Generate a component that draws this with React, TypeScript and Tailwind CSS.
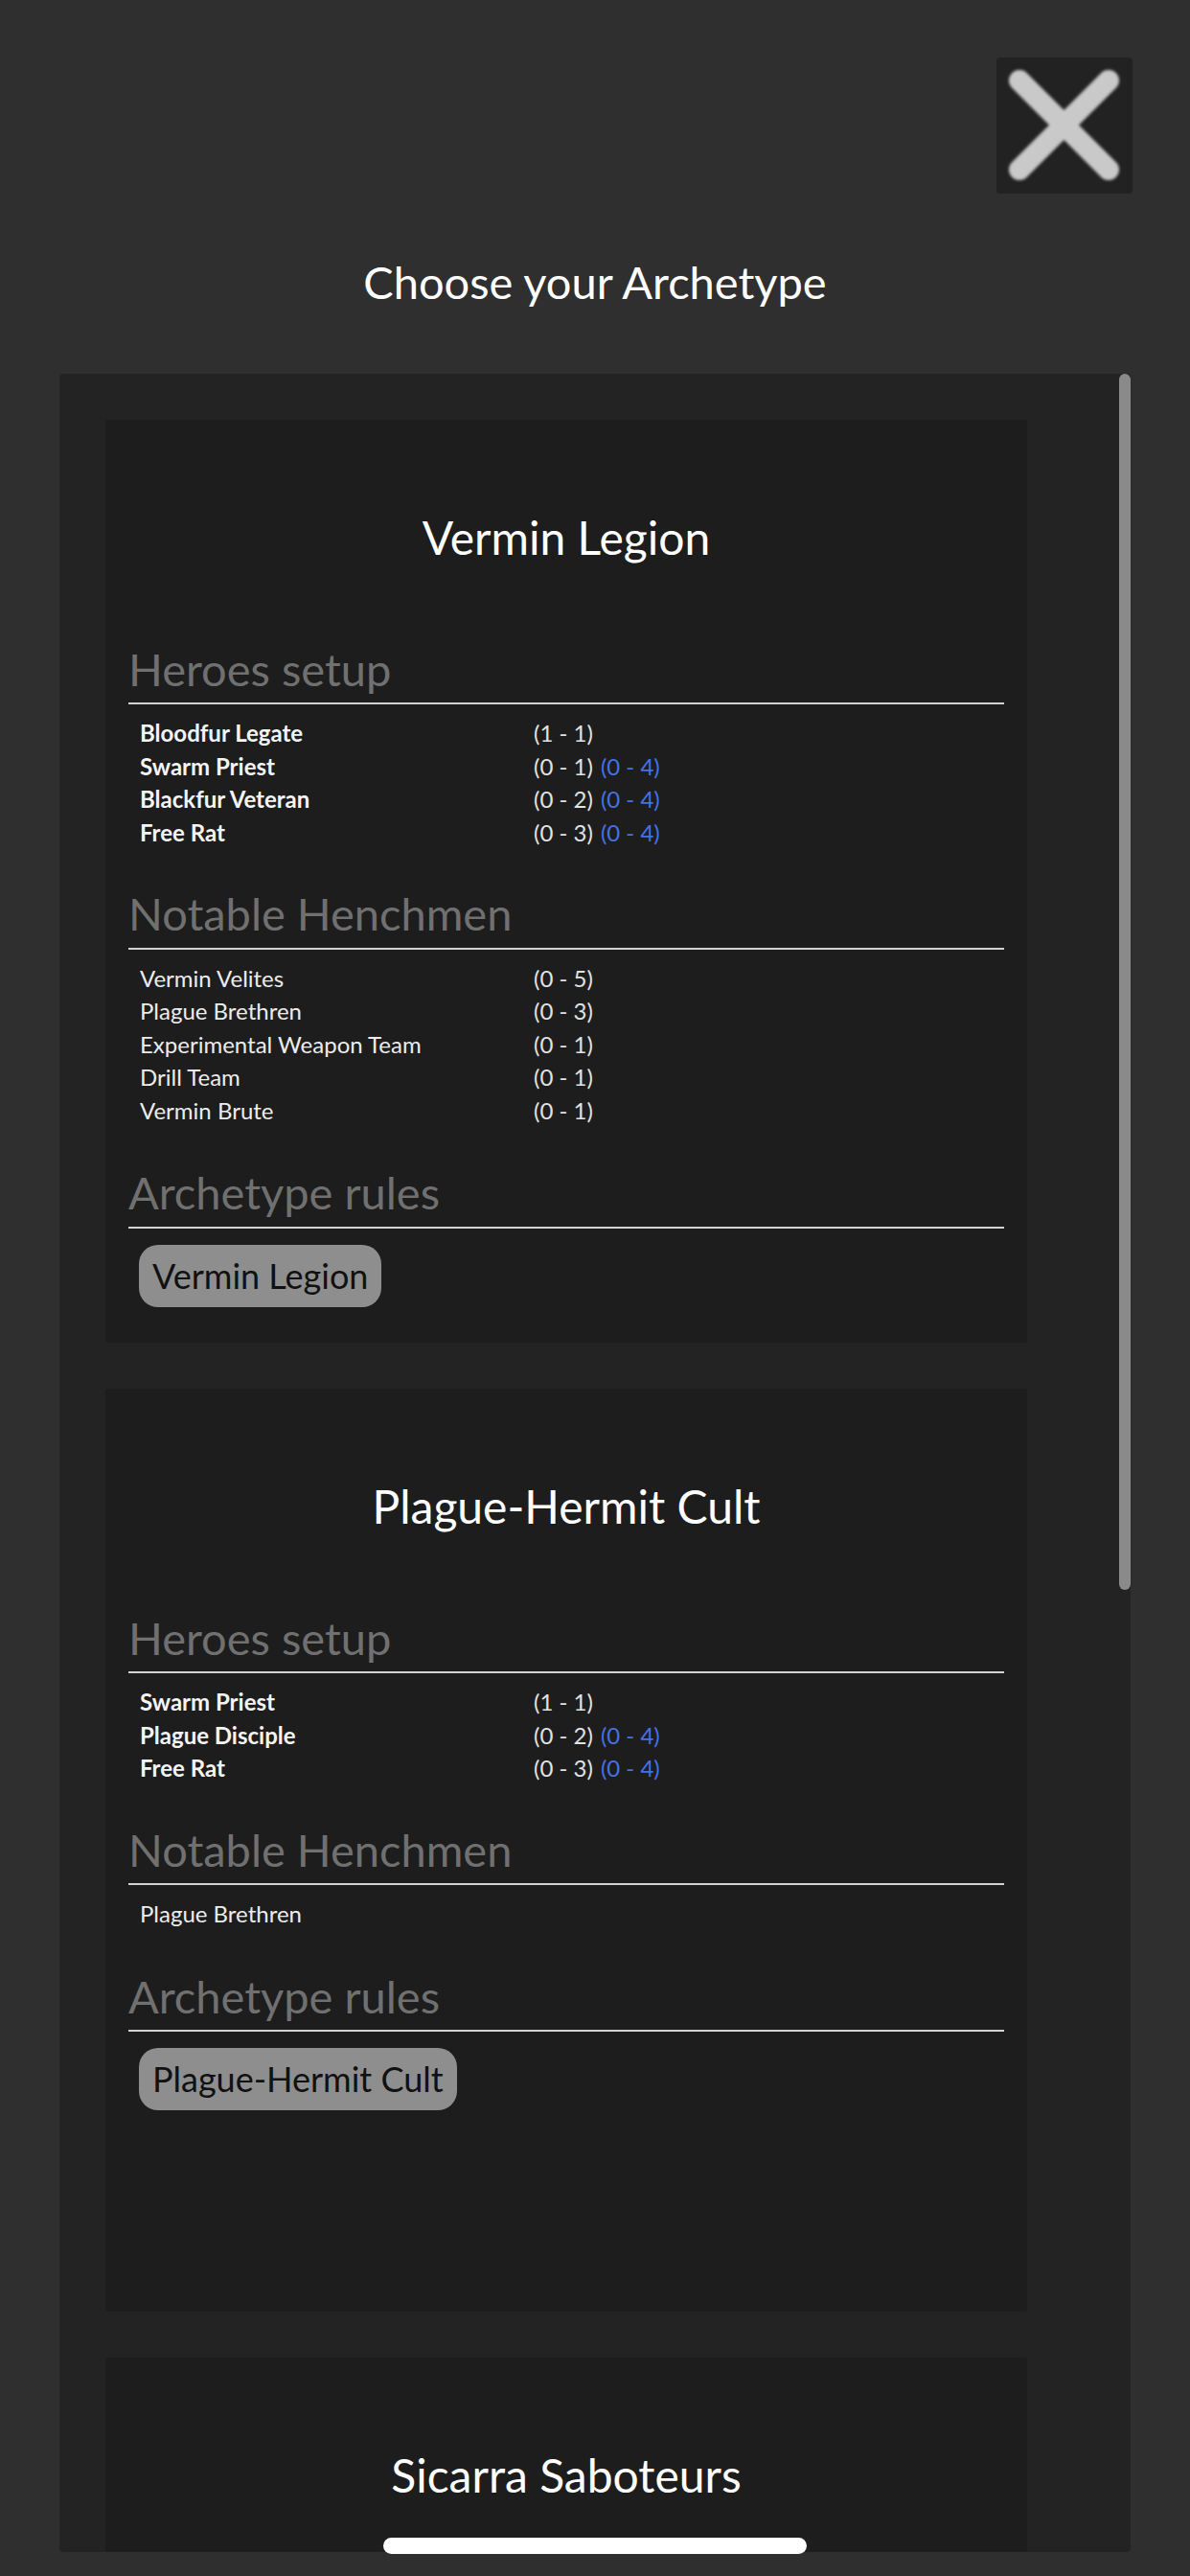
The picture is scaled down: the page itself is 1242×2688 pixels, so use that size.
import React from 'react';

interface Entry {
  name: string;
  range: string;
  extra?: string;
}

interface Archetype {
  id: string;
  title: string;
  heroes: Entry[];
  henchmen: Entry[];
  rules: string[];
}

const archetypes: Archetype[] = [
  {
    id: 'vermin-legion',
    title: 'Vermin Legion',
    heroes: [
      { name: 'Bloodfur Legate', range: '(1 - 1)' },
      { name: 'Swarm Priest', range: '(0 - 1)', extra: '(0 - 4)' },
      { name: 'Blackfur Veteran', range: '(0 - 2)', extra: '(0 - 4)' },
      { name: 'Free Rat', range: '(0 - 3)', extra: '(0 - 4)' }
    ],
    henchmen: [
      { name: 'Vermin Velites', range: '(0 - 5)' },
      { name: 'Plague Brethren', range: '(0 - 3)' },
      { name: 'Experimental Weapon Team', range: '(0 - 1)' },
      { name: 'Drill Team', range: '(0 - 1)' },
      { name: 'Vermin Brute', range: '(0 - 1)' }
    ],
    rules: ['Vermin Legion']
  },
  {
    id: 'plague-hermit',
    title: 'Plague-Hermit Cult',
    heroes: [
      { name: 'Swarm Priest', range: '(1 - 1)' },
      { name: 'Plague Disciple', range: '(0 - 2)', extra: '(0 - 4)' },
      { name: 'Free Rat', range: '(0 - 3)', extra: '(0 - 4)' }
    ],
    henchmen: [{ name: 'Plague Brethren', range: '' }],
    rules: ['Plague-Hermit Cult']
  },
  {
    id: 'sicarra',
    title: 'Sicarra Saboteurs',
    heroes: [],
    henchmen: [],
    rules: []
  }
];

const SectionTitle = ({ children }: { children: React.ReactNode }) => (
  <h3 className="pb-[7px] border-b-2 border-[#d2d2d2] text-[47px] leading-[1.2] text-[#707070]">
    {children}
  </h3>
);

const EntryTable = ({ rows, bold }: { rows: Entry[]; bold?: boolean }) => (
  <div className="mt-[13px] pl-[12px] grid grid-cols-[411px_1fr] text-[24px] leading-[34.5px]">
    {rows.map((row) => (
      <React.Fragment key={row.name}>
        <span className={bold ? 'font-bold text-[#f4f4f4]' : 'text-[#ececec]'}>{row.name}</span>
        <span className="text-[#e2e2e2]">
          {row.range}
          {row.extra && <span className="ml-[8px] text-[#4471e4]">{row.extra}</span>}
        </span>
      </React.Fragment>
    ))}
  </div>
);

const ArchetypeCard = ({ item }: { item: Archetype }) => (
  <div className="w-[962px] h-[963px] shrink-0 bg-[#1d1d1d] rounded-[3px] px-[24px] pt-[94px]">
    <h2 className="text-center text-[48px] leading-[1.2] text-white">{item.title}</h2>

    {item.heroes.length > 0 && (
      <div className="pt-[80px]">
        <SectionTitle>Heroes setup</SectionTitle>
        <EntryTable rows={item.heroes} bold />
      </div>
    )}

    {item.henchmen.length > 0 && (
      <div className="pt-[39px]">
        <SectionTitle>Notable Henchmen</SectionTitle>
        <EntryTable rows={item.henchmen} />
      </div>
    )}

    {item.rules.length > 0 && (
      <div className="pt-[40px]">
        <SectionTitle>Archetype rules</SectionTitle>
        <div className="mt-[17px] pl-[11px] flex flex-wrap gap-3">
          {item.rules.map((rule) => (
            <span
              key={rule}
              className="px-[14px] py-[11px] rounded-[20px] bg-[#8e8e8e] text-[36px] leading-[1.2] text-[#111111]"
            >
              {rule}
            </span>
          ))}
        </div>
      </div>
    )}
  </div>
);

const CloseIcon = () => (
  <svg width="142" height="142" viewBox="0 0 142 142" className="blur-[1.5px]">
    <path
      d="M24 24 L117 117 M117 24 L24 117"
      stroke="#c9c9c9"
      strokeWidth="22"
      strokeLinecap="round"
      fill="none"
    />
  </svg>
);

export default function App() {
  return (
    <div
      className="relative min-h-screen bg-[#2f2f2f] pt-[60px]"
      style={{ fontFamily: 'Lato, "Open Sans", sans-serif' }}
    >
      <div className="flex justify-end pr-[60px]">
        <button className="w-[142px] h-[142px] bg-[#222222] rounded-[4px] flex items-center justify-center">
          <CloseIcon />
        </button>
      </div>

      <h1 className="mt-[64px] text-center text-[47px] leading-[1.2] text-white">Choose your Archetype</h1>

      <div className="relative mx-[62px] mt-[68px] h-[2273px] bg-[#232323] rounded-[4px] overflow-hidden">
        <div className="flex flex-col gap-[48px] pl-[48px] pt-[48px]">
          {archetypes.map((item) => (
            <ArchetypeCard key={item.id} item={item} />
          ))}
        </div>
        {/* scroll thumb */}
        <div className="absolute top-0 right-0 w-[12px] h-[1269px] rounded-full bg-[#8a8a8a]" />
      </div>

      {/* home indicator */}
      <div className="absolute left-[400px] bottom-[23px] w-[442px] h-[17px] rounded-full bg-white" />
    </div>
  );
}
